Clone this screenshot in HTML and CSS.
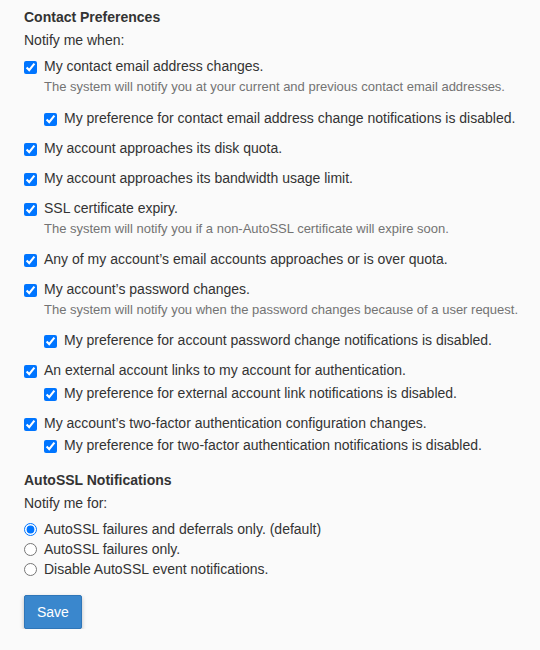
FILE: index.html
```html
<!DOCTYPE html>
<html lang="en">
<head>
<meta charset="utf-8">
<title>Contact Preferences</title>
<link rel="stylesheet" href="styles.css">
</head>
<body>
<form class="prefs">
  <h4 class="title">Contact Preferences</h4>
  <p class="lead">Notify me when:</p>
  <div class="list">
    <div class="item">
      <label class="row"><input type="checkbox" checked><span>My contact email address changes.</span></label>
      <p class="help">The system will notify you at your current and previous contact email addresses.</p>
      <label class="row sub after-help"><input type="checkbox" checked><span>My preference for contact email address change notifications is disabled.</span></label>
    </div>
    <div class="item">
      <label class="row"><input type="checkbox" checked><span>My account approaches its disk quota.</span></label>
    </div>
    <div class="item">
      <label class="row"><input type="checkbox" checked><span>My account approaches its bandwidth usage limit.</span></label>
    </div>
    <div class="item">
      <label class="row"><input type="checkbox" checked><span>SSL certificate expiry.</span></label>
      <p class="help">The system will notify you if a non-AutoSSL certificate will expire soon.</p>
    </div>
    <div class="item">
      <label class="row"><input type="checkbox" checked><span>Any of my account’s email accounts approaches or is over quota.</span></label>
    </div>
    <div class="item">
      <label class="row"><input type="checkbox" checked><span>My account’s password changes.</span></label>
      <p class="help">The system will notify you when the password changes because of a user request.</p>
      <label class="row sub after-help"><input type="checkbox" checked><span>My preference for account password change notifications is disabled.</span></label>
    </div>
    <div class="item">
      <label class="row"><input type="checkbox" checked><span>An external account links to my account for authentication.</span></label>
      <label class="row sub"><input type="checkbox" checked><span>My preference for external account link notifications is disabled.</span></label>
    </div>
    <div class="item">
      <label class="row"><input type="checkbox" checked><span>My account’s two-factor authentication configuration changes.</span></label>
      <label class="row sub"><input type="checkbox" checked><span>My preference for two-factor authentication notifications is disabled.</span></label>
    </div>
  </div>

  <h4 class="title section">AutoSSL Notifications</h4>
  <p class="lead">Notify me for:</p>
  <div class="radios">
    <label class="radio"><input type="radio" name="autossl" checked><span>AutoSSL failures and deferrals only. (default)</span></label>
    <label class="radio"><input type="radio" name="autossl"><span>AutoSSL failures only.</span></label>
    <label class="radio"><input type="radio" name="autossl"><span>Disable AutoSSL event notifications.</span></label>
  </div>

  <button type="button" class="btn">Save</button>
</form>
</body>
</html>
```
FILE: styles.css
```css
html, body {
  margin: 0;
  padding: 0;
  background: #fafafa;
}
body {
  font-family: "Liberation Sans", Arial, sans-serif;
  font-size: 14px;
  line-height: 20px;
  color: #333;
}
.prefs {
  padding: 7px 8px 0 24px;
}
.title {
  margin: 0;
  font-size: 14px;
  font-weight: bold;
  line-height: 20px;
}
.title.section {
  margin-top: 15px;
}
.lead {
  margin: 3px 0 0 0;
}
.list {
  margin-top: 6px;
}
.item + .item {
  margin-top: 10px;
}
.row {
  display: flex;
  align-items: flex-start;
}
.row input {
  width: 13px;
  height: 13px;
  margin: 5px 7px 0 0;
  flex: none;
}
.row.sub {
  margin-left: 20px;
  margin-top: 2.5px;
}
.row.sub.after-help {
  margin-top: 10.5px;
}
.help {
  margin: 1px 0 0 20px;
  font-size: 13px;
  color: #737373;
}
.radios {
  margin-top: 6px;
}
.radio {
  display: flex;
  align-items: flex-start;
}
.radio input {
  width: 13px;
  height: 13px;
  margin: 4px 7px 0 0;
  flex: none;
}
.btn {
  margin-top: 16px;
  font-family: inherit;
  font-size: 14px;
  line-height: 20px;
  padding: 6px 12px;
  color: #fff;
  background: #3a87cd;
  border: 1px solid #2f76b8;
  border-radius: 2px;
  box-shadow: 0 2px 4px rgba(0, 0, 0, 0.25);
}
```
